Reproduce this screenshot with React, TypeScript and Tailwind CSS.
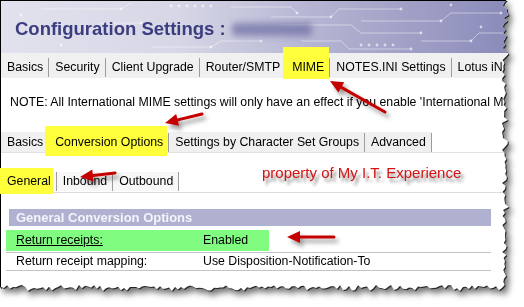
import React from "react";

// deterministic jitter so the torn edge is the same on every render
function rand(seed: number) {
    const x = Math.sin(seed * 12.9898) * 43758.5453;
    return x - Math.floor(x);
}

function tornClip(w: number, h: number) {
    const pts: string[] = ["0px 0px"];
    for (let y = 0; y <= h - 8; y += 3) {
        const x = w - 10 + rand(y + 1) * 5 + (rand(y * 0.37 + 7) > 0.8 ? 2 : 0);
        pts.push(`${x.toFixed(1)}px ${y}px`);
    }
    for (let x = w - 10; x >= 0; x -= 3) {
        const y = h - 9 + rand(x + 91) * 4 + (rand(x * 0.21 + 3) > 0.8 ? 2 : 0);
        pts.push(`${x}px ${y.toFixed(1)}px`);
    }
    pts.push(`0px ${h - 6}px`);
    return `polygon(${pts.join(",")})`;
}

interface TabProps {
    label: string;
    hl?: string;
}

function Tab({ label, hl }: TabProps) {
    return (
        <div className="relative flex h-[19px] items-center border-r border-[#9c9c9c] pl-[6px] pr-[5px]">
            {hl && <span className={`absolute bg-[#ffff3c] ${hl}`} />}
            <span className="relative">{label}</span>
        </div>
    );
}

function Arrow({ x1, y1, x2, y2 }: { x1: number; y1: number; x2: number; y2: number }) {
    const dx = x2 - x1;
    const dy = y2 - y1;
    const len = Math.sqrt(dx * dx + dy * dy);
    const ux = dx / len;
    const uy = dy / len;
    const head = 13;
    const half = 6;
    const bx = x2 - ux * head;
    const by = y2 - uy * head;
    const p = [
        `${x2},${y2}`,
        `${bx - uy * half},${by + ux * half}`,
        `${bx + uy * half},${by - ux * half}`,
    ].join(" ");
    return (
        <g>
            <line x1={x1} y1={y1} x2={bx + ux * 2} y2={by + uy * 2} stroke="#c40000" strokeWidth={3} strokeLinecap="round" />
            <polygon points={p} fill="#c40000" />
        </g>
    );
}

function Circuit() {
    return (
        <svg className="absolute inset-0" width="512" height="52" viewBox="0 0 512 52">
            <g stroke="#ffffff" strokeOpacity="0.45" fill="none" strokeWidth="1">
                <path d="M40 8 H120 L130 2" />
                <path d="M150 46 H210 L220 40 H260" />
                <path d="M270 16 H330 L338 8 H400" />
                <path d="M280 24 H350 L360 32 H420" />
                <path d="M300 40 H340 L348 48 H410" />
                <path d="M360 20 H440 L450 12 H500" />
                <path d="M420 40 H470 L478 32 H505" />
                <path d="M230 6 H290 L296 12" />
                <path d="M90 30 L100 22 H140" />
            </g>
            <g fill="#ffffff" fillOpacity="0.6">
                {[
                    [120, 8], [210, 46], [330, 16], [400, 8], [420, 32], [410, 48],
                    [440, 20], [500, 12], [470, 40], [296, 12], [140, 22], [260, 40],
                    [170, 5], [178, 5], [186, 5], [194, 5], [202, 5], [210, 5],
                    [360, 44], [368, 44], [376, 44], [384, 44], [392, 44],
                    [60, 44], [20, 14], [450, 4], [480, 26],
                ].map(([cx, cy], i) => (
                    <circle key={i} cx={cx} cy={cy} r="1.4" />
                ))}
            </g>
        </svg>
    );
}

export default function App() {
    const W = 512;
    const H = 294;

    return (
        <div className="relative h-[307px] w-[524px] overflow-hidden bg-white font-['Liberation_Sans',Arial,sans-serif] text-black">

            <div className="[filter:drop-shadow(1.5px_1.5px_0_#262626)_drop-shadow(3px_4px_3px_rgba(0,0,0,0.55))]">
                <div
                    className="flex h-[294px] w-[512px] flex-col border-l border-t border-black bg-white"
                    style={{ clipPath: tornClip(W, H) }}
                >

                    {/* Header */}

                    <div className="relative h-[52px] shrink-0 bg-[linear-gradient(90deg,#e2e2ee_0%,#d6d6e6_35%,#b0b0d0_65%,#8a8aba_100%)]">
                        <Circuit />
                        <div className="relative flex items-center gap-[6px] pl-[14px] pt-[17px] text-[18.5px] font-bold leading-[22px] text-[#3c3c80]">
                            <span>Configuration Settings :</span>
                            <span className="h-[13px] w-[80px] rounded-sm bg-[#6e6ea4] opacity-70 blur-[3px]" />
                        </div>
                    </div>

                    {/* Main tabs */}

                    <div className="flex h-[25px] shrink-0 items-center whitespace-nowrap bg-[#f0f0f0] pt-[3px] text-[12.3px]">
                        <Tab label="Basics" />
                        <Tab label="Security" />
                        <Tab label="Client Upgrade" />
                        <Tab label="Router/SMTP" />
                        <Tab label="MIME" hl="-top-[11px] -bottom-[2px] -left-[3px] right-0" />
                        <Tab label="NOTES.INI Settings" />
                        <Tab label="Lotus iNotes" />
                    </div>

                    <div className="mt-[17px] h-[14px] shrink-0 whitespace-nowrap pl-[9px] text-[12.3px] leading-[14px]">
                        NOTE: All International MIME settings will only have an effect if you enable 'International MIME settings for this document'
                    </div>

                    {/* MIME sub tabs */}

                    <div className="mt-[23px] flex h-[21px] shrink-0 items-center whitespace-nowrap border-b border-[#e2e2e2] text-[12.3px]">
                        <div className="flex h-full items-center bg-[#f0f0f0]">
                            <Tab label="Basics" />
                            <Tab label="Conversion Options" hl="-top-[7px] -bottom-[4px] -left-[4px] right-[1px]" />
                            <Tab label="Settings by Character Set Groups" />
                            <Tab label="Advanced" />
                        </div>
                    </div>

                    {/* Conversion sub tabs */}

                    <div className="relative mt-[13px] flex h-[27px] shrink-0 items-center whitespace-nowrap border-b border-[#dcdcdc] pt-[4px] text-[12.3px]">
                        <div className="flex items-center bg-[#f7f7f7]">
                            <Tab label="General" hl="-top-[4px] -bottom-[3px] -left-[1px] right-[3px]" />
                            <Tab label="Inbound" />
                            <Tab label="Outbound" />
                        </div>
                        <span className="absolute left-[261px] top-[-4px] text-[15px] text-[#d41414] [text-shadow:3px_4px_3px_rgba(0,0,0,0.45)]">
                            property of My I.T. Experience
                        </span>
                    </div>

                    {/* Options table */}

                    <div className="mt-[16px] flex shrink-0 flex-col pl-[5px] pr-[21px] text-[12.3px]">
                        <div className="ml-[3px] flex h-[17px] items-center bg-[#b0b0d0] pl-[7px] text-[13px] font-bold text-[#f4f4fc]">
                            General Conversion Options
                        </div>

                        <div className="mt-[4px] flex h-[23px] border-b border-[#c4c4c4]">
                            <div className="flex h-[21px] w-[263px] items-center bg-[#80fc80] pl-[10px]">
                                <span className="w-[187px] underline">Return receipts:</span>
                                <span>Enabled</span>
                            </div>
                        </div>

                        <div className="flex h-[18px] items-center border-b border-[#c4c4c4] pl-[10px]">
                            <span className="w-[187px]">Return receipt mapping:</span>
                            <span>Use Disposition-Notification-To</span>
                        </div>
                    </div>

                </div>
            </div>

            {/* Annotation arrows */}

            <svg className="pointer-events-none absolute inset-0" width="524" height="307" viewBox="0 0 524 307">
                <defs>
                    <filter id="sh" x="-20%" y="-20%" width="160%" height="160%">
                        <feDropShadow dx="3" dy="4" stdDeviation="2" floodColor="#000" floodOpacity="0.4" />
                    </filter>
                </defs>
                <g filter="url(#sh)">
                    <Arrow x1={385} y1={112} x2={330} y2={81} />
                    <Arrow x1={202} y1={114} x2={165} y2={123} />
                    <Arrow x1={115} y1={173} x2={80} y2={177} />
                    <Arrow x1={334} y1={237} x2={287} y2={237} />
                </g>
            </svg>

        </div>
    );
}
